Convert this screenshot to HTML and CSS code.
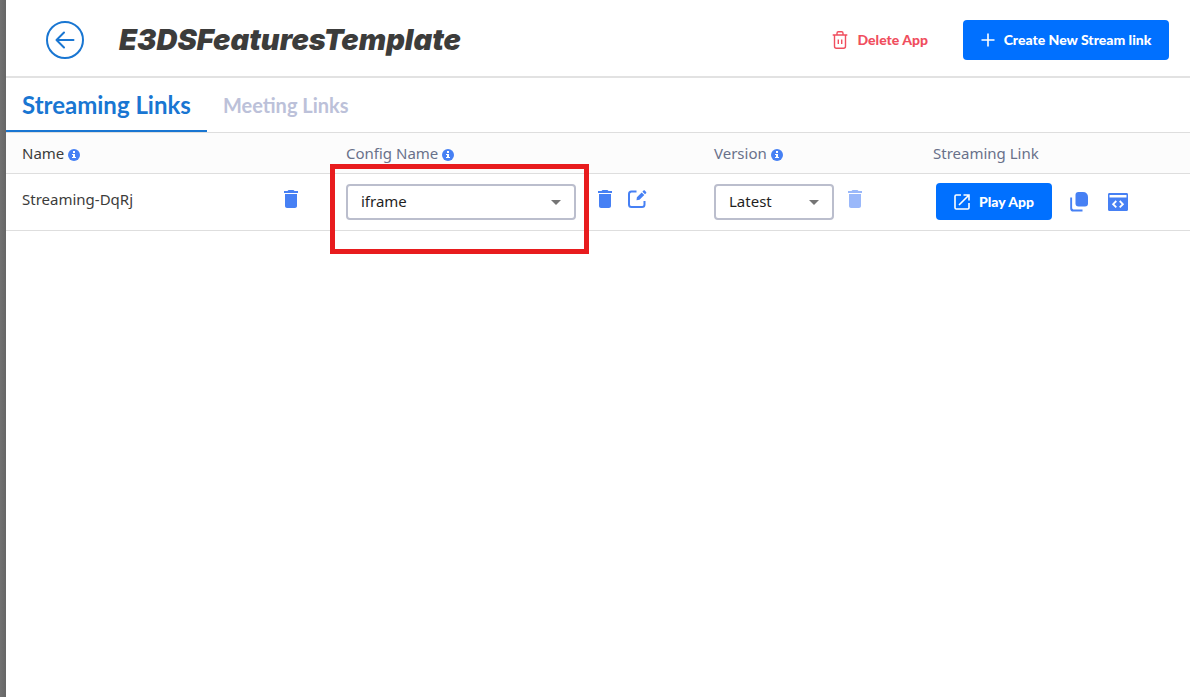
FILE: index.html
```html
<!DOCTYPE html>
<html lang="en">
<head>
<meta charset="utf-8">
<title>E3DSFeaturesTemplate</title>
<link rel="stylesheet" href="styles.css">
</head>
<body>
<svg class="sprite" aria-hidden="true">
  <symbol id="trash" viewBox="0 0 24 24"><path d="M6 19c0 1.100.9 2 2 2h8c1.100 0 2-.9 2-2V7H6v12zM19 4h-3.500l-1-1h-5l-1 1H5v2h14V4z"/></symbol>
  <symbol id="info" viewBox="0 0 12 12"><circle cx="6" cy="6" r="6"/><path fill="#fff" d="M5 2h2v2H5zM4 5h3v3h1v1H4V8h1V6H4z"/></symbol>
  <symbol id="caret" viewBox="0 0 24 24"><path d="M7 10l5 5 5-5z"/></symbol>
</svg>
<main class="panel">
  <header class="header">
    <button class="back" type="button" aria-label="Back">
      <svg viewBox="0 0 38 38"><circle cx="19" cy="19" r="18"/><path d="M27.500 19H10.500M18 11.500L10.500 19l7.500 7.500"/></svg>
    </button>
    <h1 class="title">E3DSFeaturesTemplate</h1>
    <button class="delete" type="button">
      <svg viewBox="0 0 16 18"><path d="M.7 4h14.600M5 4V2.200C5 1.400 5.500.8 6.300.8h3.400c.8 0 1.300.6 1.300 1.400V4M2.500 4v11.200c0 1.200.7 2 1.900 2h7.200c1.200 0 1.900-.8 1.900-2V4M6.300 8.500v4.500M9.700 8.500v4.500"/></svg>
      Delete App
    </button>
    <button class="primary create" type="button">
      <svg viewBox="0 0 14 14"><path d="M7 .5v13M.5 7h13"/></svg>
      Create New Stream link
    </button>
  </header>
  <nav class="tabs">
    <a class="tab active" href="#streaming">Streaming Links</a>
    <a class="tab" href="#meeting">Meeting Links</a>
  </nav>
  <table class="links">
    <thead>
      <tr>
        <th class="name" scope="col">Name <svg class="info"><use href="#info"/></svg></th>
        <th class="config" scope="col">Config Name <svg class="info"><use href="#info"/></svg></th>
        <th class="version" scope="col">Version <svg class="info"><use href="#info"/></svg></th>
        <th scope="col">Streaming Link</th>
      </tr>
    </thead>
    <tbody>
      <tr>
        <td><div class="cell spread"><span>Streaming-DqRj</span>
          <button class="icon" type="button" aria-label="Delete link"><svg><use href="#trash"/></svg></button></div></td>
        <td><div class="cell">
          <div class="picker wide">
            <select aria-label="Config name"><option>iframe</option></select>
            <svg class="caret"><use href="#caret"/></svg>
            <span class="highlight"></span>
          </div>
          <div class="tools">
            <button class="icon" type="button" aria-label="Delete config"><svg><use href="#trash"/></svg></button>
            <button class="icon" type="button" aria-label="Edit config"><svg viewBox="0 0 24 24"><path fill="none" stroke="currentColor" stroke-width="2" d="M11.500 4.500H6.500C5 4.500 4 5.500 4 7v10.500C4 19 5 20 6.500 20H17c1.500 0 2.500-1 2.500-2.500V14"/><path d="M11.500 13.200l.4-3 4.800-4.800 2.600 2.600-4.800 4.800zM17.400 4.700l1.100-1.100c.4-.4.900-.4 1.300 0l1.300 1.300c.4.400.4.900 0 1.300L20 7.300z"/></svg></button>
          </div>
        </div></td>
        <td><div class="cell">
          <div class="picker narrow">
            <select aria-label="Version"><option>Latest</option></select>
            <svg class="caret"><use href="#caret"/></svg>
          </div>
          <div class="tools">
            <button class="icon" type="button" aria-label="Delete version" disabled><svg><use href="#trash"/></svg></button>
          </div>
        </div></td>
        <td><div class="cell actions">
          <button class="primary play" type="button">
            <svg viewBox="0 0 16 16"><path d="M7 1H2.200C1.500 1 1 1.500 1 2.200v11.600c0 .7.500 1.200 1.200 1.200h11.600c.7 0 1.200-.5 1.200-1.200V9M9.500 1H15v5.500M15 1L5 11"/></svg>
            Play App
          </button>
          <button class="icon" type="button" aria-label="Copy link"><svg viewBox="0 0 24 24"><path d="M11.500 2h4.500c3.200 0 5 2 5 5v6.500c0 2-1 3-3 3h-6.500c-2 0-3-1-3-3V5c0-2 1-3 3-3z"/><path d="M3.200 7.500h1.900v10c0 1.500.7 2.100 2.100 2.100h8.300v1.900H6.300c-2 0-3.100-1.100-3.100-3.100z"/></svg></button>
          <button class="icon" type="button" aria-label="Embed code"><svg viewBox="0 0 24 24"><path fill-rule="evenodd" d="M3.500 3h17c1 0 1.500.6 1.500 1.500v15c0 .9-.5 1.500-1.500 1.500h-17c-1 0-1.500-.6-1.500-1.500v-15C2 3.600 2.500 3 3.500 3zM3.500 5v2.500h17V5z"/><path fill="none" stroke="#fff" stroke-width="1.800" d="M10.300 11l-3.200 3.200 3.200 3.200M13.700 11l3.200 3.200-3.200 3.200"/></svg></button>
        </div></td>
      </tr>
    </tbody>
  </table>
</main>
</body>
</html>
```
FILE: styles.css
```css
* { box-sizing: border-box; }
body {
  margin: 0;
  padding-left: 6px;
  min-height: 100vh;
  display: flex;
  background: linear-gradient(to right, #717171, #666 6px);
  font: 15px/20px "Noto Sans", sans-serif;
  color: #3c3c3b;
}
button { font: inherit; border: 0; padding: 0; background: none; color: inherit; display: flex; align-items: center; cursor: pointer; }
svg { fill: currentColor; display: block; }
.sprite { display: none; }
.panel { flex: 1; min-width: 0; background: #fff; }
.header { display: flex; align-items: center; height: 78px; padding: 4px 21px 0 40px; border-bottom: 2px solid #e2e2e2; }
.back { color: #1976d2; margin-right: 35px; }
.back svg { width: 38px; height: 38px; fill: none; stroke: currentColor; stroke-width: 2; stroke-linecap: round; stroke-linejoin: round; }
.title { flex: 1; margin: 0; font: italic 900 29px/36px Inter, sans-serif; }
.delete, .primary { font: 900 14px/20px Lato, sans-serif; }
.delete { gap: 10px; margin-right: 35px; color: #f04e5e; }
.delete svg { width: 16px; height: 18px; fill: none; stroke: currentColor; stroke-width: 1.4; }
.primary { justify-content: center; border-radius: 4px; background: #0070ff; color: #fff; }
.primary svg { fill: none; stroke: currentColor; stroke-width: 1.6; }
.create { gap: 9px; height: 40px; width: 206px; }
.create svg { width: 14px; height: 14px; }
.tabs { display: flex; height: 55px; border-bottom: 1px solid #dedede; }
.tab { padding: 12px 16px 0; font: 700 20px/30px Lato, sans-serif; color: #bcc1d9; text-decoration: none; }
.active { font-size: 24px; color: #1976d2; border-bottom: 2px solid #1976d2; }
.links { width: 100%; border-collapse: collapse; table-layout: fixed; }
.name { width: 324px; }
.config { width: 368px; }
.version { width: 219px; }
th, td { text-align: left; border-bottom: 1px solid #dedede; }
th { height: 40px; padding: 0 16px; background: #fcfcfc; font-weight: 400; color: #69718a; }
th.name { color: #3c3c3b; }
td { padding: 9px 16px; }
.info { display: inline-block; width: 12px; height: 12px; color: #4680f4; vertical-align: -2px; }
.cell { display: flex; align-items: center; height: 38px; }
.spread { justify-content: space-between; padding: 0 11px 6px 0; }
.tools { display: flex; gap: 8px; padding-bottom: 6px; }
.icon { color: #4680f4; }
.icon:disabled { color: #9ab8fa; }
.icon svg { width: 24px; height: 24px; }
.picker { position: relative; margin-right: 17px; }
.wide { width: 230px; }
.narrow { width: 120px; margin-right: 9px; }
select { appearance: none; display: block; width: 100%; height: 36px; padding: 0 32px 2px 13px; border: 2px solid #bbbecd; border-radius: 4px; background: #fff; color: #1f1f1f; font: inherit; }
.caret { position: absolute; right: 8px; top: 6px; width: 24px; height: 24px; color: #757575; pointer-events: none; }
.highlight { position: absolute; left: -16px; top: -20px; width: 259px; height: 90px; border: 5px solid #e81c1e; pointer-events: none; }
.actions { gap: 15px; padding-left: 3px; }
.play { gap: 9px; width: 116px; height: 37px; }
.play svg { width: 16px; height: 16px; }
```
